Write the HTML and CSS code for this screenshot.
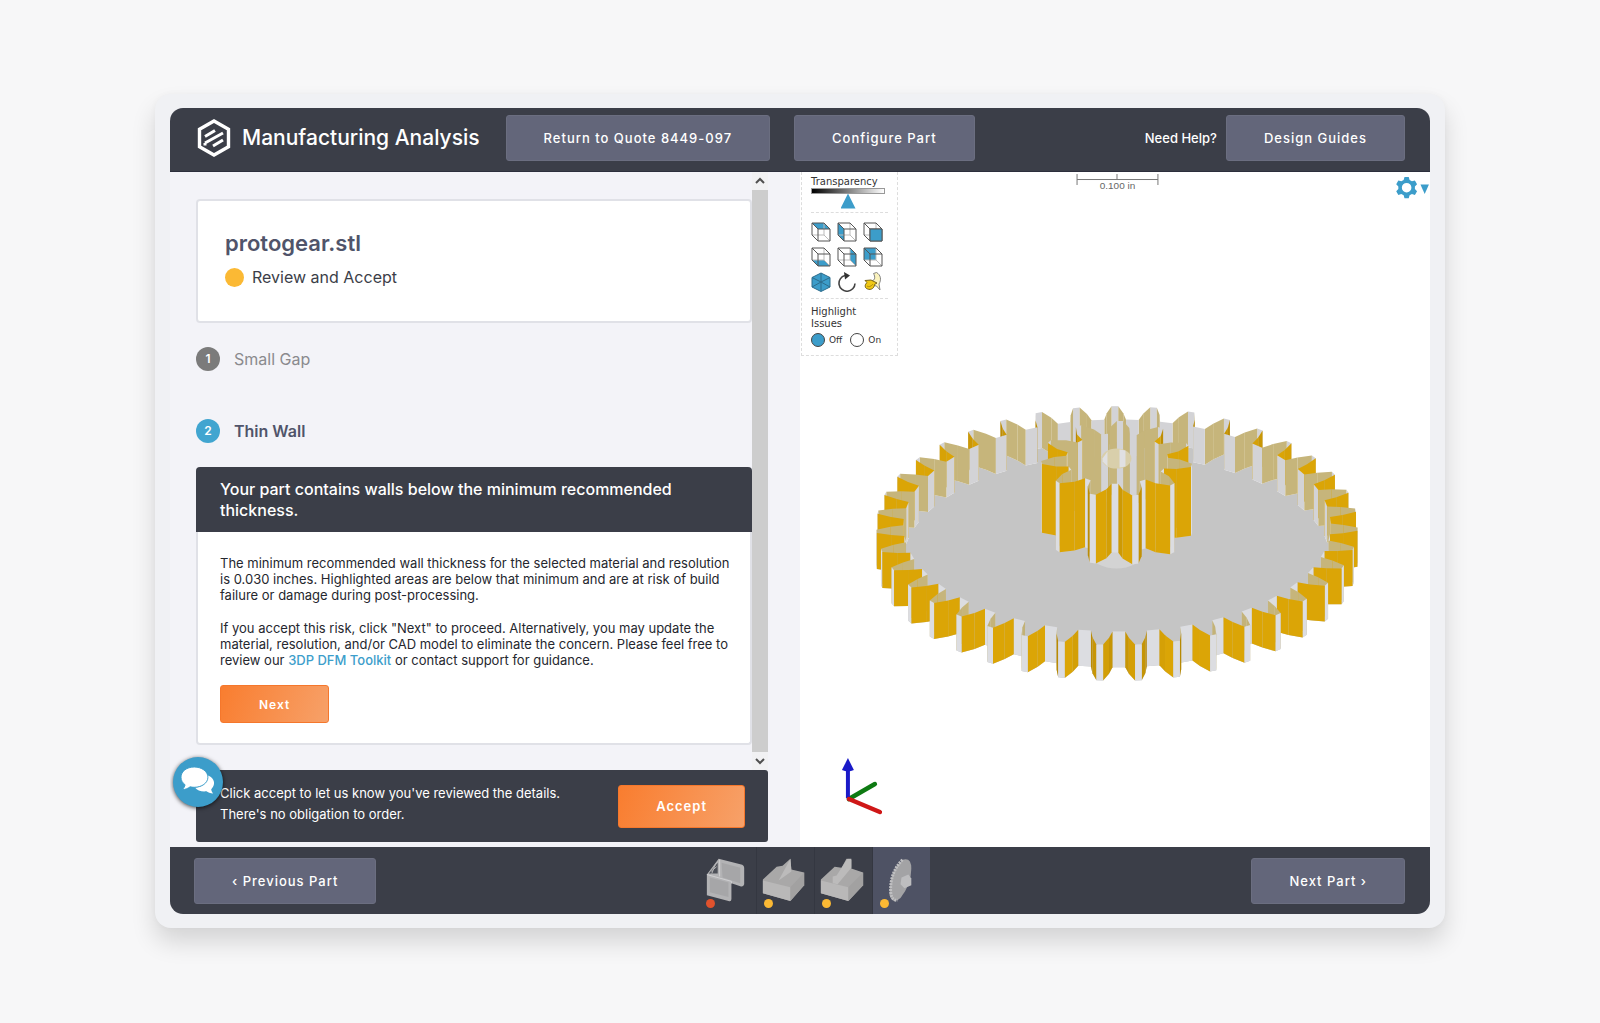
FILE: index.html
```html
<!DOCTYPE html>
<html lang="en">
<head>
  <meta charset="UTF-8" />
  <meta name="viewport" content="width=device-width, initial-scale=1" />
  <title>Manufacturing Analysis</title>
  <link rel="stylesheet" href="styles.css">
</head>
<body>

  <div class="frame">
    <div class="app">

      <header class="topbar">
        <svg class="logo" viewBox="0 0 36 40" aria-hidden="true">
          <path d="M18 3 L32.500 11.300 V28.700 L18 37 L3.500 28.700 V11.300 Z" fill="none" stroke="#fff" stroke-width="3.400" />
          <path d="M9 18.500 L19 12.500 M9 25 L27 15 M9 27.500 L9 25 M17 28 L27 22" stroke="#fff" stroke-width="3" fill="none" />
        </svg>
        <h1>Manufacturing Analysis</h1>
        <button class="btn" type="button">Return to Quote 8449-097</button>
        <button class="btn" type="button">Configure Part</button>
        <span class="help">Need Help?</span>
        <button class="btn" type="button">Design Guides</button>
      </header>

      <main class="content">
        <section class="panel">
          <div class="scroll">
            <div class="list">
              <div class="card">
                <h2>protogear.stl</h2>
                <p class="status"><span class="dot"></span>Review and Accept</p>
              </div>

              <div class="step"><span class="num">1</span>Small Gap</div>
              <div class="step active"><span class="num">2</span>Thin Wall</div>

              <article class="issue">
                <h3>Your part contains walls below the minimum recommended thickness.</h3>
                <div class="issue-body">
                  <p>The minimum recommended wall thickness for the selected material and resolution<br>is 0.030 inches. Highlighted areas are below that minimum and are at risk of build<br>failure or damage during post-processing.</p>
                  <p>If you accept this risk, click "Next" to proceed. Alternatively, you may update the<br>material, resolution, and/or CAD model to eliminate the concern. Please feel free to<br>review our <a href="#">3DP DFM Toolkit</a> or contact support for guidance.</p>
                  <button class="btn orange small" type="button">Next</button>
                </div>
              </article>
            </div>
            <div class="scrollbar">
              <svg viewBox="0 0 16 16"><path d="M4 10 L8 6 L12 10" /></svg>
              <div class="thumb"></div>
              <svg viewBox="0 0 16 16"><path d="M4 6 L8 10 L12 6" /></svg>
            </div>
          </div>

          <div class="accept">
            <p>Click accept to let us know you've reviewed the details.<br>There's no obligation to order.</p>
            <button class="btn orange" type="button">Accept</button>
            <button class="chat" type="button" aria-label="Chat">
              <svg viewBox="0 0 36 30">
                <path d="M23 8 C30 8 35 12 35 17 C35 20 33.500 22 32 23.500 C32 25 33 26.500 34 28 C31 28 28.500 27 27 25.800 C22 26.500 17 25 15 22 C22 21.500 28 17 28 11.500 C28 10 24 9 23 8 Z" />
                <path class="bubble" d="M14 0 C22 0 28.500 4.800 28.500 10.800 C28.500 17 22 21.500 14 21.500 C12.500 21.500 11 21.300 9.600 21 C7.500 22.500 5 23.800 1.500 24 C3 22.500 4 20.500 4.300 18.800 C1.500 16.800 0 14 0 10.800 C0 4.800 6 0 14 0 Z" />
              </svg>
            </button>
          </div>
        </section>

        <section class="viewer">
          <svg class="scene" viewBox="799 172 631 676">
            <g id="gear"></g>
            <path d="M1076.500 174 V185 M1157.500 174 V185 M1076.500 179.500 H1157.500 M1116.500 174 V179" stroke="#777" fill="none" />
            <text x="1117" y="189" class="scale">0.100 in</text>
            <path d="M848 800 L874 785" stroke="#0e7a12" stroke-width="4.500" stroke-linecap="round" />
            <path d="M847 799 V768" stroke="#1a1ac8" stroke-width="4" />
            <path d="M847 759 L853 771 Q847 774 841 771 Z" fill="#1a1ac8" />
            <path d="M848 800 L879 813" stroke="#cf1717" stroke-width="4.500" stroke-linecap="round" />
          </svg>

          <div class="tools">
            <label for="transparency">Transparency</label>
            <input type="range" id="transparency" min="0" max="100" value="50">
            <div class="views">
              <button type="button" aria-label="Top view"><svg viewBox="0 0 20 20"><path class="face" d="M1 1 H13 L19 7 H7 Z" /><use href="#cube" /></svg></button>
              <button type="button" aria-label="Left view"><svg viewBox="0 0 20 20"><path class="face" d="M1 1 L7 7 V19 L1 13 Z" /><use href="#cube" /></svg></button>
              <button type="button" aria-label="Front view"><svg viewBox="0 0 20 20"><use href="#cube" /><path class="face" d="M7 7 H19 V19 H7 Z" stroke="#555" /></svg></button>
              <button type="button" aria-label="Bottom view"><svg viewBox="0 0 20 20"><path class="face" d="M1 13 H13 L19 19 H7 Z" /><use href="#cube" /></svg></button>
              <button type="button" aria-label="Right view"><svg viewBox="0 0 20 20"><path class="face" d="M13 1 L19 7 V19 L13 13 Z" /><use href="#cube" /></svg></button>
              <button type="button" aria-label="Back view"><svg viewBox="0 0 20 20"><path class="face" d="M1 1 H13 V13 H1 Z" /><use href="#cube" /></svg></button>
              <button type="button" aria-label="Isometric view"><svg viewBox="0 0 20 20"><path class="face" d="M10 1 L19 5.500 V15 L10 19.500 L1 15 V5.500 Z" /><path class="line" d="M10 1 L19 5.500 V15 L10 19.500 L1 15 V5.500 Z M10 1 V10 L1 15 M10 10 L19 15 M1 5.500 L10 10 L19 5.500 M10 10 V19" /></svg></button>
              <button type="button" aria-label="Rotate"><svg viewBox="0 0 20 20"><path d="M8 3.500 A8 8 0 1 0 18 11.500" fill="none" stroke="#444" stroke-width="1.600" /><path d="M7 0 L13 3.500 L8 7.500 Z" fill="#333" /></svg></button>
              <button type="button" aria-label="Banana for scale">
                <svg viewBox="0 0 20 20">
                  <path d="M10.500 1.500 L13.500 0.500 C18 3 18.500 8 16 12 L17 18 L13.500 14 L9 13 L9 9 C12 8 12.500 5 10.500 1.500 Z" fill="#fbf3bd" stroke="#777" stroke-width="0.900" />
                  <path d="M2 8.500 L8 8 L14 11 L11.500 12.500 C11.500 16 8 18.500 4.500 17 C1.500 16 1.500 12.500 4 10.500 Z" fill="#f0c814" stroke="#6b5810" stroke-width="0.900" />
                  <path d="M4 14 C6 15.500 8.500 14 10 12" fill="none" stroke="#b08c0c" />
                </svg>
              </button>
            </div>
            <fieldset>
              <legend>Highlight<br>Issues</legend>
              <div class="radios">
                <label><input type="radio" name="highlight" checked>Off</label>
                <label><input type="radio" name="highlight">On</label>
              </div>
            </fieldset>
          </div>

          <button class="settings" type="button" aria-label="Settings">
            <svg viewBox="0 0 32 22">
              <path fill-rule="evenodd" d="M8 1 H12 L12.800 3.800 L15 5 L17.800 4.200 L19.800 7.700 L17.800 9.800 V12.200 L19.800 14.300 L17.800 17.800 L15 17 L12.800 18.200 L12 21 H8 L7.200 18.200 L5 17 L2.200 17.800 L0.200 14.300 L2.200 12.200 V9.800 L0.200 7.700 L2.200 4.200 L5 5 L7.200 3.800 Z M10 6.500 A4.500 4.500 0 1 0 10 15.500 A4.500 4.500 0 1 0 10 6.500 Z" />
              <path d="M23 8 H31 L27 17 Z" />
            </svg>
          </button>
        </section>
      </main>

      <footer class="bottombar">
        <button class="btn" type="button">‹ Previous Part</button>
        <div class="parts">
          <button type="button" aria-label="Part 1">
            <svg viewBox="0 0 58 66">
              <path d="M8 28 L20 12 L44 18 Q46 19 46 21 V38 Q45 41 42 40 L33 37 V53 Q33 56 30 55 L8 49 Z" fill="#b3b3b5" />
              <path d="M10 27 L19 16 V27 Z" fill="#4d5058" />
              <path d="M12 25 L18 20 M13 27 L17 17" stroke="#b3b3b5" />
              <path d="M23 16 L42 21 V37 L24 31 Z M11 31 L30 36 V51 L11 46 Z" fill="#a6a6a8" />
              <path d="M8 28 L33 35 V37 M21 13 V30" stroke="#d0d0d2" fill="none" />
            </svg>
            <span class="dot red"></span>
          </button>
          <button type="button" aria-label="Part 2">
            <svg viewBox="0 0 58 66">
              <path d="M6 33 L20 20 L26 19 L34 12 L35 23 L48 26 V39 L34 55 L6 47 Z" fill="#a9a8a8" />
              <path d="M6 34 L34 41 V55 L6 47 Z" fill="#b9b8b8" />
              <path d="M34 41 L48 26 V39 L34 55 Z" fill="#a2a1a1" />
              <path d="M22 34 L34 12 L35 25 Z" fill="#bcbbbb" />
            </svg>
            <span class="dot"></span>
          </button>
          <button type="button" aria-label="Part 3">
            <svg viewBox="0 0 58 66">
              <path d="M6 33 L20 20 L27 21 L32 12 L37 13 L37 22 L49 26 V39 L34 55 L6 47 Z" fill="#a9a8a8" />
              <path d="M6 34 L34 41 V55 L6 47 Z" fill="#b9b8b8" />
              <path d="M34 41 L49 26 V39 L34 55 Z" fill="#a2a1a1" />
              <path d="M18 37 V30 L22 29 L33 12 H37 V21 L23 38 Z" fill="#bcbbbb" />
            </svg>
            <span class="dot"></span>
          </button>
          <button class="selected" type="button" aria-label="Part 4">
            <svg viewBox="0 0 58 66">
              <path d="M30 13 Q39 10 39 22 Q39 38 28 52 Q20 59 17 49 Q16 26 30 13 Z" fill="#a3a3a5" />
              <path d="M30 13 Q17 26 18 46 Q19 55 25 54" fill="none" stroke="#c0c0c2" stroke-width="3" stroke-dasharray="2 1" />
              <path d="M29 31 L36 28 L39 32 V39 L32 42 L28 38 Z" fill="#bdbdbf" />
            </svg>
            <span class="dot"></span>
          </button>
        </div>
        <button class="btn" type="button">Next Part ›</button>
      </footer>

    </div>
  </div>

  <svg class="defs" aria-hidden="true">
    <defs>
      <g id="cube">
        <path d="M1 13 H13 V1 M13 13 L19 19" fill="none" stroke="#bbb" />
        <path d="M1 1 H13 L19 7 V19 H7 L1 13 Z M1 1 L7 7 H19 M7 7 V19" fill="none" stroke="#555" />
      </g>
    </defs>
  </svg>

  <script src="gear.js"></script>
</body>
</html>
```

FILE: styles.css
```css
* {
  box-sizing: border-box;
}

body {
  margin: 0;
  padding: 94px 155px;
  background: #f7f7f8;
  color: #25272e;
  font-family: Inter, sans-serif;
  font-size: 13px;
}

h1, h2, h3, p {
  margin: 0;
}

button {
  font-family: inherit;
  cursor: pointer;
}

.frame {
  padding: 14px 15px;
  border-radius: 16px;
  background: #f0f1f4;
  box-shadow: 0 14px 24px rgba(0, 0, 0, 0.14), 0 0 6px rgba(0, 0, 0, 0.03);
}

.app {
  border-radius: 13px;
  overflow: hidden;
  background: #f3f3f8;
}

/* bars */
.topbar {
  display: flex;
  align-items: center;
  height: 64px;
  padding: 0 25px 4px 26px;
  background: #3b3e48;
  border-bottom: 1px solid #2c2e3c;
  color: #fff;
}

.logo {
  width: 36px;
  height: 40px;
}

.topbar h1 {
  margin: 0 26px 0 10px;
  font-size: 21px;
  font-weight: 500;
}

.btn {
  height: 46px;
  padding: 0 37px;
  border: 1px solid #6b6e80;
  border-radius: 3px;
  background: #63667a;
  color: #fff;
  font-size: 13px;
  font-weight: 500;
  letter-spacing: 1px;
  white-space: nowrap;
}

.topbar .btn + .btn {
  margin-left: 24px;
}

.help {
  margin-left: auto;
  margin-right: 9px;
  font-weight: 500;
}

.bottombar {
  display: flex;
  align-items: center;
  justify-content: space-between;
  height: 67px;
  padding: 0 25px 0 24px;
  background: #3b3e48;
}

.content {
  display: flex;
}

/* left side */
.panel {
  flex: 0 0 50%;
  display: flex;
  flex-direction: column;
  padding: 0 32px 5px 26px;
}

.scroll {
  display: flex;
  flex: 1;
}

.list {
  flex: 1;
  padding: 27px 0 25px;
}

.scrollbar {
  display: flex;
  flex-direction: column;
  width: 16px;
  background: #f1f1f3;
}

.scrollbar svg {
  height: 18px;
  fill: none;
  stroke: #505050;
  stroke-width: 2;
}

.thumb {
  flex: 1;
  background: #cdcdcd;
}

.card {
  height: 124px;
  padding: 25px 27px;
  border: 2px solid #e0e1e7;
  border-radius: 4px;
  background: #fff;
}

.card h2 {
  color: #50546a;
  font-size: 22px;
  font-weight: 600;
  line-height: 34px;
}

.status {
  display: flex;
  align-items: center;
  gap: 8px;
  color: #3b3e48;
  font-size: 16px;
  line-height: 34px;
}

.dot {
  width: 19px;
  height: 19px;
  border-radius: 50%;
  background: #fbb934;
}

.step {
  display: flex;
  align-items: center;
  gap: 14px;
  height: 72px;
  color: #8a8a8e;
  font-size: 16px;
}

.step.active {
  color: #50546a;
  font-weight: 600;
}

.num {
  width: 24px;
  height: 24px;
  border-radius: 50%;
  background: #7b7b7b;
  color: #fff;
  font-size: 12px;
  font-weight: 600;
  line-height: 24px;
  text-align: center;
}

.active .num {
  background: #41a5d0;
}

.issue {
  border: 2px solid #e0e1e7;
  border-top: 0;
  border-radius: 4px;
  background: #fff;
}

.issue h3 {
  margin: 0 -2px;
  padding: 12px 60px 11px 24px;
  border-radius: 4px 4px 0 0;
  background: #3b3e48;
  color: #fff;
  font-size: 16px;
  font-weight: 500;
  line-height: 21px;
}

.issue-body {
  padding: 23px 0 20px 22px;
}

.issue-body p {
  margin-bottom: 17px;
  font-size: 13px;
  line-height: 16px;
  white-space: nowrap;
}

.issue-body a {
  color: #3d9ecb;
  font-weight: 500;
  text-decoration: none;
}

.orange {
  border-color: #f5772c;
  background: linear-gradient(110deg, #f97d2f, #f7a169);
  font-weight: 600;
}

.orange.small {
  height: 38px;
  padding: 0 38px;
  font-size: 12px;
}

.accept {
  position: relative;
  display: flex;
  align-items: center;
  justify-content: space-between;
  height: 72px;
  padding: 0 23px 0 24px;
  border-radius: 3px;
  background: #3b3e48;
  color: #fff;
}

.accept p {
  font-size: 13px;
  line-height: 21px;
  padding-bottom: 4px;
}

.accept .btn {
  height: 43px;
}

.chat {
  position: absolute;
  left: -23px;
  top: -13px;
  width: 50px;
  height: 50px;
  padding: 8px 8px 10px;
  border: 0;
  border-radius: 50%;
  background: #3c9dca;
  box-shadow: 0 1px 4px rgba(0, 0, 0, 0.7);
}

.chat svg {
  display: block;
  width: 100%;
  fill: #fff;
}

.bubble {
  stroke: #3c9dca;
  stroke-width: 1;
}

/* 3d viewer */
.viewer {
  flex: 1;
  display: grid;
  background: #fff;
}

.viewer > * {
  grid-area: 1 / 1;
}

.scene {
  width: 100%;
  height: 100%;
}

.scale {
  fill: #666;
  font-family: "Liberation Sans", sans-serif;
  font-size: 10px;
  text-anchor: middle;
}

.tools {
  justify-self: start;
  align-self: start;
  margin-left: 1px;
  width: 97px;
  padding: 4px 9px 8px;
  border: 1px dashed #ddd;
  border-top: 0;
  background: #fff;
  color: #333;
  font-family: "DejaVu Sans", sans-serif;
  font-size: 10px;
  line-height: 12px;
}

.tools > label {
  display: block;
}

.tools input[type="range"] {
  -webkit-appearance: none;
  appearance: none;
  display: block;
  width: 74px;
  height: 6px;
  margin: 0 0 18px;
  border: 1px solid #999;
  background: linear-gradient(to right, #000, #fff);
}

.tools input[type="range"]::-webkit-slider-thumb {
  -webkit-appearance: none;
  width: 15px;
  height: 15px;
  margin-top: 20px;
  background: #3c9dca;
  clip-path: polygon(50% 0, 100% 100%, 0 100%);
}

.views {
  display: grid;
  grid-template-columns: repeat(3, 20px);
  gap: 5px 6px;
  padding: 9px 0 6px;
  border-top: 1px dashed #ddd;
  border-bottom: 1px dashed #ddd;
}

.views button {
  height: 20px;
  padding: 0;
  border: 0;
  background: none;
}

.views svg {
  display: block;
}

.face {
  fill: #3c9dca;
}

.line {
  fill: none;
  stroke: #2d6c8c;
}

.tools fieldset {
  margin: 7px 0 0;
  padding: 0;
  border: 0;
}

.tools legend {
  padding: 0;
}

.radios {
  display: flex;
  gap: 8px;
  margin-top: 3px;
}

.radios label {
  display: flex;
  align-items: center;
  gap: 4px;
  font-size: 9px;
}

.radios input {
  appearance: none;
  width: 14px;
  height: 14px;
  margin: 0;
  border: 1px solid #444;
  border-radius: 50%;
}

.radios input:checked {
  background: #3c9dca;
}

.settings {
  justify-self: end;
  align-self: start;
  width: 34px;
  margin-top: 4px;
  padding: 0;
  border: 0;
  background: none;
}

.settings svg {
  display: block;
  fill: #3c9dca;
}

/* part picker */
.parts {
  display: flex;
  align-self: stretch;
}

.parts button {
  display: grid;
  width: 58px;
  padding: 0;
  border: 0;
  border-left: 1px solid #343741;
  background: none;
}

.parts button:first-child {
  border-color: transparent;
}

.parts button > * {
  grid-area: 1 / 1;
}

.parts .selected {
  background: #4e5264;
}

.parts .dot {
  align-self: end;
  width: 9px;
  height: 9px;
  margin: 0 0 6px 7px;
}

.parts .red {
  background: #e0522d;
}

.defs {
  position: absolute;
  width: 0;
  height: 0;
}
```

FILE: gear.js
```js
const SVG = "http://www.w3.org/2000/svg";
const gear = document.getElementById("gear");
const TILT = 0.496;

function poly(points, fill) {
  const el = document.createElementNS(SVG, "polygon");
  el.setAttribute("points", points.map(p => p[0].toFixed(1) + "," + p[1].toFixed(1)).join(" "));
  el.setAttribute("fill", fill);
  gear.appendChild(el);
}

function ellipse(cx, cy, rx, ry, fill) {
  const el = document.createElementNS(SVG, "ellipse");
  el.setAttribute("cx", cx);
  el.setAttribute("cy", cy);
  el.setAttribute("rx", rx);
  el.setAttribute("ry", ry);
  el.setAttribute("fill", fill);
  gear.appendChild(el);
}

// profile: [radius, angle from the tooth centre in degrees, is the next wall a flank]
function outline(g) {
  const pts = [];
  for (let i = 0; i < g.teeth; i++) {
    const mid = -90 + g.phase + i * 360 / g.teeth;
    g.profile.forEach(([r, a, flank]) => {
      const t = (mid + a) * Math.PI / 180;
      pts.push({ x: g.cx + r * Math.cos(t), y: g.cy + r * Math.sin(t) * TILT, flank });
    });
  }
  return pts;
}

function mix(a, b, t) {
  return "rgb(" + a.map((v, i) => Math.round(v + (b[i] - v) * t)).join(",") + ")";
}

function drawGear(g) {
  const pts = outline(g);
  poly(pts.map(p => [p.x, p.y + g.height]), g.floor);

  const walls = pts.map((a, i) => {
    const b = pts[(i + 1) % pts.length];
    const dx = b.x - a.x;
    const dy = (b.y - a.y) / TILT;
    return { a, b, flank: a.flank, facing: -dx / Math.hypot(dx, dy) };
  });

  const draw = w => {
    const quad = [[w.a.x, w.a.y], [w.b.x, w.b.y], [w.b.x, w.b.y + g.height], [w.a.x, w.a.y + g.height]];
    let fill;
    if (w.facing > 0) {
      fill = w.flank ? mix([176, 131, 4], [219, 165, 6], Math.min(1, w.facing * 2)) : "#dcdde1";
    } else {
      fill = w.flank ? mix([192, 175, 116], [198, 181, 123], Math.min(1, -w.facing * 2)) : "#d3d3d6";
    }
    poly(quad, fill);
  };

  walls.sort((m, n) => (m.a.y + m.b.y) - (n.a.y + n.b.y)).forEach(draw);
}

drawGear({
  cx: 1116.5, cy: 526, height: 36, teeth: 39, phase: -0.5, floor: "#c5c5c5",
  profile: [[214, -2.9, true], [227, -2.1, true], [241, -0.8, false], [241, 0.8, true], [227, 2.1, true], [214, 2.9, false]]
});

ellipse(1116, 556, 25, 13, "#d3d3d3");

drawGear({
  cx: 1116.5, cy: 459, height: 69, teeth: 11, phase: 2.3, floor: "#cfcfd0",
  profile: [[51, -12.5, true], [63, -9, true], [76, -2.4, false], [76, 2.4, true], [63, 9, true], [51, 12.5, false]]
});

// bore seen through the top of the hub
ellipse(1116, 459, 15, 10, "#d9cfab");
poly([[1119, 450], [1125, 451], [1125, 467], [1119, 468]], "#e0e0e2");
poly([[1102, 459], [1107, 452], [1107, 467], [1102, 462]], "#e0e0e2");
```
